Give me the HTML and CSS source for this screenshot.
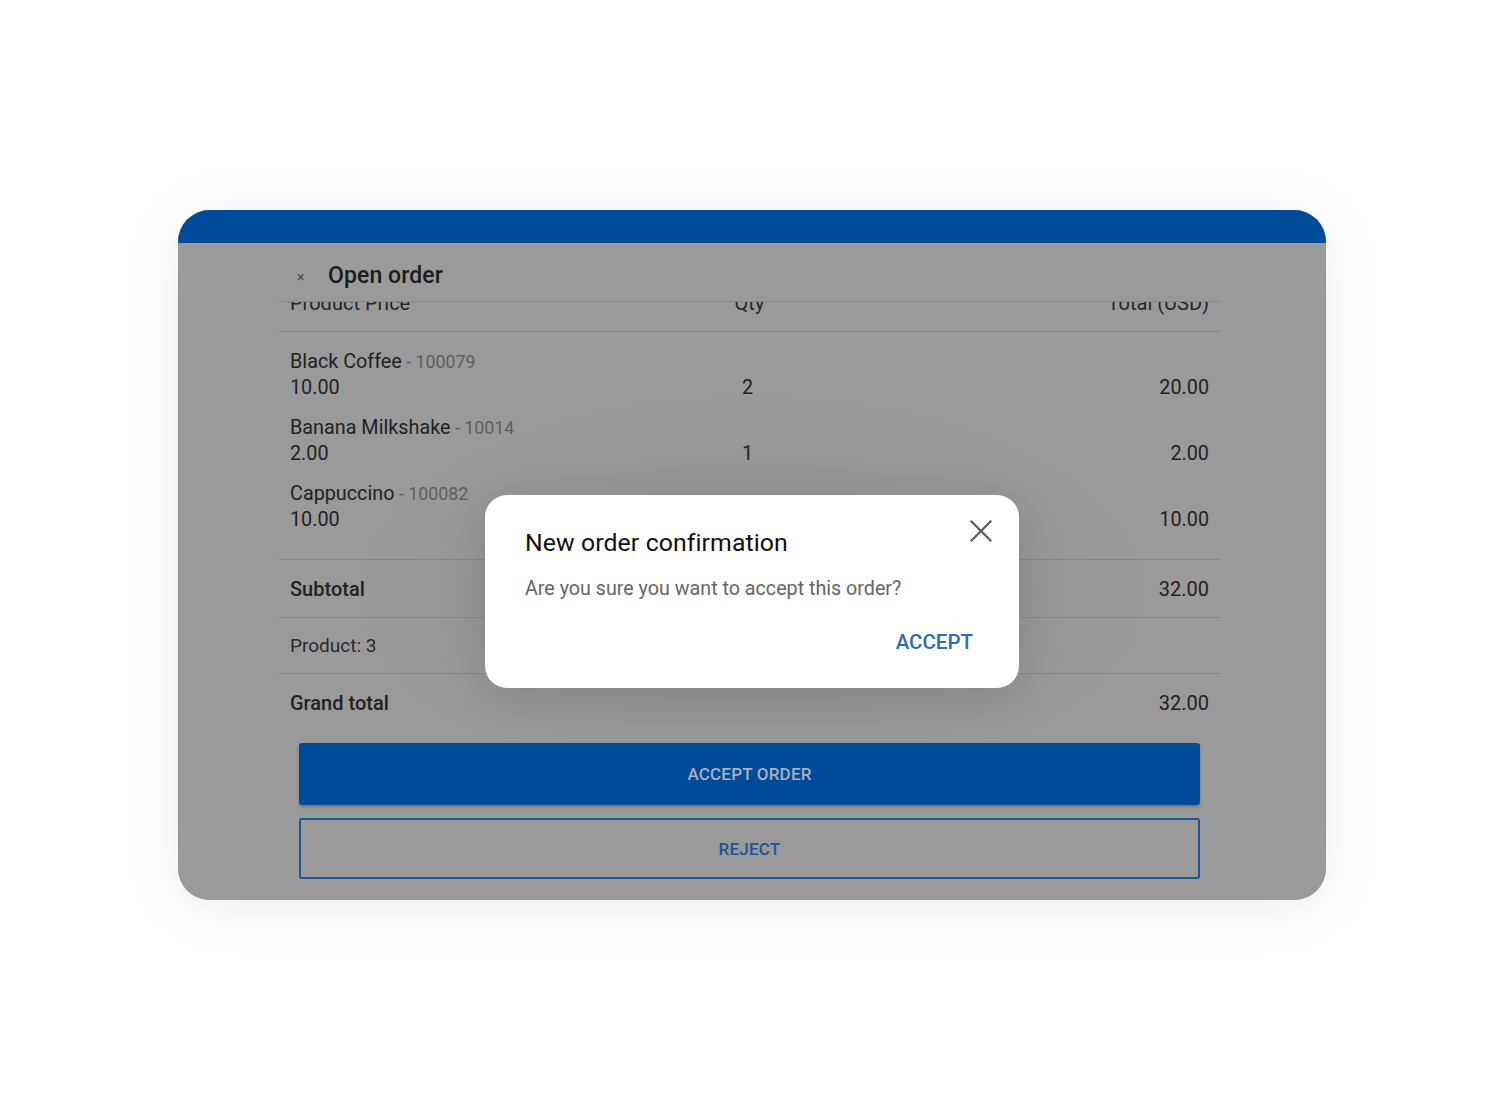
FILE: index.html
```
<!DOCTYPE html>
<html>
<head>
<meta charset="utf-8">
<link rel="stylesheet" href="styles.css">
</head>
<body>
<div class="stage">
  <div class="frame">
    <div class="topbar"></div>
    <div class="screen">
      <div class="header">
        <span class="hclose">×</span>
        <span class="htitle">Open order</span>
      </div>
      <div class="table">
        <div class="thead">
          <div class="th">Product Price</div>
          <div class="th center">Qty</div>
          <div class="th right">Total (USD)</div>
        </div>
        <div class="items">
          <div class="row">
            <div class="cell"><div class="name">Black Coffee<span class="code"> - 100079</span></div><div class="line">10.00</div></div>
            <div class="cell center line qty">2</div>
            <div class="cell right line">20.00</div>
          </div>
          <div class="row">
            <div class="cell"><div class="name">Banana Milkshake<span class="code"> - 10014</span></div><div class="line">2.00</div></div>
            <div class="cell center line qty">1</div>
            <div class="cell right line">2.00</div>
          </div>
          <div class="row">
            <div class="cell"><div class="name">Cappuccino<span class="code"> - 100082</span></div><div class="line">10.00</div></div>
            <div class="cell center line qty">1</div>
            <div class="cell right line">10.00</div>
          </div>
        </div>
        <div class="sumrow subtotal"><span class="strong">Subtotal</span><span>32.00</span></div>
        <div class="sumrow count"><span>Product: 3</span></div>
        <div class="sumrow grand"><span class="strong">Grand total</span><span>32.00</span></div>
        <div class="actions">
          <button class="btn primary">ACCEPT ORDER</button>
          <button class="btn outline">REJECT</button>
        </div>
      </div>
    </div>
    <div class="dialog">
      <div class="dclose">
        <svg width="22" height="22" viewBox="0 0 22 22"><path d="M1.5 1.5 L20.5 20.5 M20.5 1.5 L1.5 20.5" stroke="#5a5a5a" stroke-width="2.2" stroke-linecap="square"/></svg>
      </div>
      <div class="dtitle">New order confirmation</div>
      <div class="dbody">Are you sure you want to accept this order?</div>
      <div class="dactions"><span class="daccept">ACCEPT</span></div>
    </div>
  </div>
</div>
</body>
</html>
```

FILE: styles.css
```
* { box-sizing: border-box; }
html, body { margin: 0; padding: 0; background: #ffffff; }
body { font-family: Roboto, "Liberation Sans", sans-serif; }

.stage {
  width: 1500px;
  height: 1116px;
  padding: 210px 0 0 178px;
}

.frame {
  position: relative;
  width: 1148px;
  height: 690px;
  border-radius: 32px;
  overflow: hidden;
  background: #9a9a9a;
  box-shadow: 0 6px 60px rgba(0, 0, 0, 0.09);
}

.topbar {
  height: 33px;
  background: #004b99;
}

.screen {
  height: 657px;
  background: #9a9a9a;
  background-image: radial-gradient(ellipse 420px 210px at 573px 350px, rgba(0,0,0,0.05), rgba(0,0,0,0) 100%);
}

.header {
  height: 58px;
  display: flex;
  align-items: center;
  padding-left: 119px;
  padding-top: 6px;
}
.hclose {
  font-size: 14px;
  color: #4a4a4a;
  width: 31px;
  line-height: 1;
  padding-top: 3px;
}
.htitle {
  font-size: 23px;
  color: #1c1c1c;
  font-weight: 500;
  letter-spacing: 0.1px;
}

.table {
  margin-left: 100px;
  width: 943px;
  color: #222222;
}

.thead {
  display: grid;
  grid-template-columns: 1fr 1fr 1fr;
  height: 31px;
  border-top: 1px solid #878787;
  border-bottom: 1px solid #878787;
  overflow: hidden;
  padding: 0 12px;
}
.th {
  font-size: 20px;
  line-height: 20px;
  margin-top: -9px;
  color: #262626;
}
.center { text-align: center; }
.right { text-align: right; }

.items {
  padding: 10px 12px 19px;
  border-bottom: 1px solid #878787;
}
.row {
  display: grid;
  grid-template-columns: 1fr 1fr 1fr;
  padding: 7px 0;
  align-items: end;
}
.cell { font-size: 19.5px; }
.name { line-height: 26px; font-size: 19.8px; color: #222; }
.code { font-size: 17.8px; color: #5e5e5e; }
.line { line-height: 26px; font-size: 19.8px; }
.qty { padding-right: 4px; }

.sumrow {
  display: flex;
  justify-content: space-between;
  align-items: center;
  padding: 0 12px;
  font-size: 20px;
}
.subtotal { height: 58px; border-bottom: 1px solid #878787; }
.count { height: 56px; border-bottom: 1px solid #878787; font-size: 19px; color: #2a2a2a; }
.grand { height: 58px; }
.strong { font-weight: 500; }

.actions {
  padding: 11px 21px 0;
  display: flex;
  flex-direction: column;
  gap: 13px;
}
.btn {
  display: block;
  width: 100%;
  font-family: Roboto, "Liberation Sans", sans-serif;
  font-size: 17px;
  font-weight: 500;
  letter-spacing: 0.2px;
  border-radius: 3px;
  cursor: pointer;
}
.primary {
  height: 62px;
  background: #004b99;
  color: #a7b1bf;
  border: none;
  box-shadow: 0 2px 3px rgba(0, 0, 0, 0.25);
}
.outline {
  height: 61px;
  background: transparent;
  color: #1c5697;
  border: 2px solid #1c5697;
}

.dialog {
  position: absolute;
  left: 307px;
  top: 285px;
  width: 534px;
  height: 193px;
  background: #ffffff;
  border-radius: 22px;
  padding: 32px 46px 0 40px;
  box-shadow: 0 8px 50px rgba(0, 0, 0, 0.12);
}
.dclose {
  position: absolute;
  right: 27px;
  top: 25px;
  width: 22px;
  height: 22px;
}
.dclose svg { display: block; }
.dtitle {
  font-size: 24.8px;
  line-height: 32px;
  color: #111111;
  letter-spacing: 0.1px;
}
.dbody {
  margin-top: 18px;
  font-size: 19.7px;
  line-height: 24px;
  color: #666666;
}
.dactions {
  display: flex;
  justify-content: flex-end;
  margin-top: 29px;
}
.daccept {
  font-size: 20.5px;
  line-height: 24px;
  font-weight: 500;
  color: #2c6db5;
}
```
